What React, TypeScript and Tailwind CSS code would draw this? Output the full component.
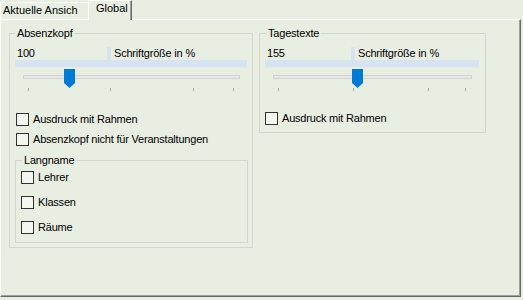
const font = "font-['Liberation_Sans',Arial,sans-serif] text-[11px] leading-[13px] tracking-[-0.2px] text-black"

function Legend({ title, indent }: { title: string; indent: string }) {
  return <legend className={`${indent} px-[2px] leading-[14px]`}>{title}</legend>
}

function CheckRow({ label }: { label: string }) {
  return (
    <div className="flex h-[13px] items-center">
      <span className="h-[13px] w-[13px] shrink-0 border border-[#333333] bg-[#f4f6f2]" />
      <span className="ml-[4px] whitespace-nowrap">{label}</span>
    </div>
  )
}

interface SizeSliderProps {
  value: string
  boxWidth: number
  stripWidth: number
  trackWidth: number
  thumbX: number
  ticks: number[]
}

function SizeSlider({ value, boxWidth, stripWidth, trackWidth, thumbX, ticks }: SizeSliderProps) {
  return (
    <div className="pl-[5px]">
      {/* value + label row */}
      <div className="mt-[7px] flex h-[13px]" style={{ width: stripWidth }}>
        <div className="pl-[2px]" style={{ width: boxWidth }}>{value}</div>
        <div className="w-[4px] bg-[#d5e3f2]" />
        <div className="ml-[3px] whitespace-nowrap">Schriftgröße in %</div>
      </div>
      <div className="h-[7px] bg-[#d5e3f2]" style={{ width: stripWidth }} />
      {/* trackbar */}
      <div className="relative ml-[8px] h-[26px]" style={{ width: trackWidth }}>
        <div className="absolute left-0 right-0 top-[8px] h-[4px] border border-[#d2d2d2] bg-[#e8e8e8]" />
        <svg className="absolute top-[2px]" style={{ left: thumbX }} width="11" height="19" viewBox="0 0 11 19">
          <path d="M0 0H11V14L5.5 19L0 14Z" fill="#0078d7" />
        </svg>
        {ticks.map((t) => (
          <div key={t} className="absolute top-[21px] h-[3px] w-px bg-[#a8a8a8]" style={{ left: t }} />
        ))}
      </div>
    </div>
  )
}

export default function App() {
  return (
    <div className={`${font} h-[300px] w-[523px] bg-[#e8eee2]`}>
      {/* tabs */}
      <div className="flex h-[19px] items-end tracking-normal">
        <div className="h-[17px] w-[88px] overflow-hidden whitespace-nowrap border-l border-t border-white pl-[2px] pt-[1px]">
          Aktuelle Ansich
        </div>
        <div className="relative z-10 -mb-px h-[20px] w-[44px] border-l border-r border-t border-l-white border-t-white border-r-[#696969] bg-[#e8eee2] pl-[7px] pt-[1px] shadow-[inset_-1px_0_0_#a0a0a0]">
          Global
        </div>
      </div>

      {/* panel */}
      <div className="flex h-[278px] w-[521px] items-start gap-[6px] border-b border-l border-r border-t border-b-[#696969] border-l-white border-r-[#696969] border-t-white pl-[8px] pt-[6px] shadow-[inset_-1px_-1px_0_#a0a0a0]">
        <fieldset className="w-[244px] border border-[#d3d6cf] pb-[4px]">
          <Legend title="Absenzkopf" indent="ml-[5px]" />
          <SizeSlider value="100" boxWidth={92} stripWidth={232} trackWidth={217} thumbX={41} ticks={[5, 87, 170, 210]} />
          <div className="mt-[20px] flex flex-col gap-[7px] pl-[6px]">
            <CheckRow label="Ausdruck mit Rahmen" />
            <CheckRow label="Absenzkopf nicht für Veranstaltungen" />
          </div>
          <fieldset className="ml-[5px] mt-[7px] w-[233px] border border-[#d3d6cf] pb-[8px]">
            <Legend title="Langname" indent="ml-[6px]" />
            <div className="mt-[4px] flex flex-col gap-[12px] pl-[5px]">
              <CheckRow label="Lehrer" />
              <CheckRow label="Klassen" />
              <CheckRow label="Räume" />
            </div>
          </fieldset>
        </fieldset>

        <fieldset className="w-[227px] border border-[#d3d6cf] pb-[7px]">
          <Legend title="Tagestexte" indent="ml-[6px]" />
          <SizeSlider value="155" boxWidth={86} stripWidth={214} trackWidth={199} thumbX={79} ticks={[5, 80, 155, 192]} />
          <div className="mt-[19px] pl-[5px]">
            <CheckRow label="Ausdruck mit Rahmen" />
          </div>
        </fieldset>
      </div>
    </div>
  )
}
